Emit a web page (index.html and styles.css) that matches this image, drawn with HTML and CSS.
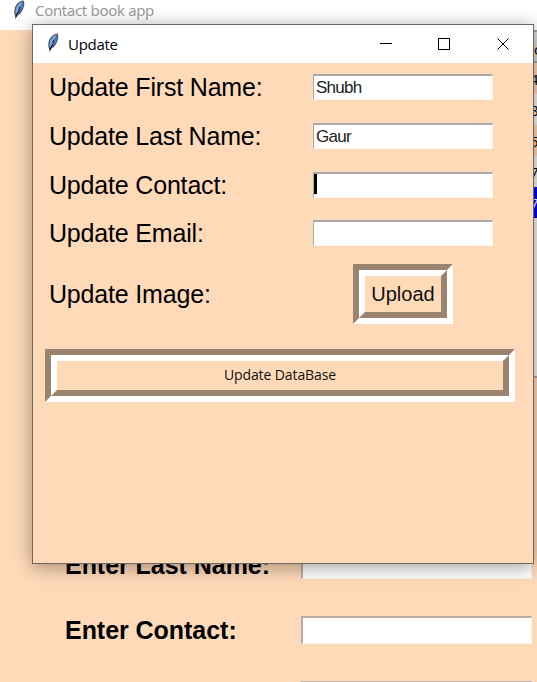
FILE: index.html
```html
<!DOCTYPE html>
<html lang="en">
<head>
<meta charset="utf-8">
<title>Contact book app</title>
<link rel="stylesheet" href="styles.css">
</head>
<body>
<svg width="0" height="0" class="defs">
  <symbol id="feather" viewBox="0 0 14 20">
    <path d="M11.500 .5C7.500 1 4 4.200 2.800 8C2 10.700 2.100 13.500 2.900 15.500L3.600 19.200L4.800 16C8.200 14.700 10.600 11 11.700 7C12.600 4.300 12.500 1.900 11.500 .5Z" fill="#4a535f"/>
    <path d="M10.800 1.400C7.600 2.200 4.800 5.300 3.900 8.500C3.300 10.700 3.300 12.700 3.700 14.500C6.700 11 9.200 6.500 10.800 1.400Z" fill="#76a8e0"/>
    <path d="M11 1.700C9.700 6.500 7.800 10.800 4.800 14.800C7.900 13.400 9.800 10 10.800 6.800C11.500 4.800 11.500 3.200 11 1.700Z" fill="#477cc6"/>
    <path d="M8 6.500L6.800 9.500L7.300 10.500L4.500 15V17" fill="none" stroke="#10151c" stroke-width=".9"/>
  </symbol>
</svg>
<div class="app">
  <header class="app-title"><svg class="feather"><use href="#feather"/></svg><span class="label app-name">Contact book app</span></header>
  <div class="table">
    <div class="th">c</div><div class="tr odd">4</div><div class="tr">8</div><div class="tr odd">5</div><div class="tr">7</div><div class="tr selected">7</div>
  </div>
  <div class="form">
    <div class="form-row"><label>Enter Last Name:</label><div class="field"></div></div>
    <div class="form-row contact"><label>Enter Contact:</label><div class="field"></div></div>
    <div class="form-row"><label></label><div class="field"></div></div>
  </div>
</div>
<div class="dialog">
  <header class="titlebar">
    <svg class="feather"><use href="#feather"/></svg><span class="label dialog-name">Update</span>
    <svg class="controls" width="132" height="12" fill="none" stroke="#000"><path d="M0 5.500H12M58.500 .5H69.500V11.500H58.500ZM117.500 .5L128.500 11.500M128.500 .5L117.500 11.500"/></svg>
  </header>
  <main>
    <div class="row"><label>Update First Name:</label><div class="entry">Shubh</div></div>
    <div class="row"><label>Update Last Name:</label><div class="entry">Gaur</div></div>
    <div class="row"><label>Update Contact:</label><div class="entry"><i class="caret"></i></div></div>
    <div class="row"><label>Update Email:</label><div class="entry"></div></div>
    <div class="row image-row"><label>Update Image:</label><div class="ridge upload"><div>Upload</div></div></div>
    <div class="ridge database"><div>Update DataBase</div></div>
  </main>
</div>
</body>
</html>
```
FILE: styles.css
```css
* { box-sizing: border-box; }
body { margin: 0; width: 537px; height: 682px; overflow: hidden; background: #ffdab9; font-family: "Liberation Sans", Arial, sans-serif; color: #000; }
.defs { position: absolute; }
.app { height: 682px; overflow: hidden; }
.app-title { height: 30px; background: #fff; display: flex; padding-left: 12px; }
.app-title .label { color: #969696; }
.feather { width: 14px; height: 20px; flex: none; }
.label { font: 15px/20px "Open Sans", "Noto Sans", sans-serif; letter-spacing: -.28px; white-space: nowrap; }
.app-name { margin-left: 9px; }
.table { margin-left: 533px; width: 80px; height: 348px; background: #f4f4f4; border-bottom: 2px solid #aaa; font: 15px/33px "Open Sans", sans-serif; text-indent: -3px; }
.th { height: 33px; background: #ddd; border-top: 2px solid #aaa; border-bottom: 2px solid #aaa; text-indent: 1px; line-height: 34px; }
.tr { height: 31px; background: #f4f4f4; }
.odd { background: #ffdab9; }
.selected { background: #00f; color: #fff; }
.form { padding: 173px 0 0 65px; }
.form-row { height: 65px; display: grid; grid-template-columns: 236px 231px; font-size: 25px; font-weight: bold; line-height: 28px; letter-spacing: -.04px; }
.form-row label { white-space: nowrap; }
.field { height: 28px; background: #fff; border: 1px solid #fff1e5; border-top: 2px solid #b8aea6; border-left: 2px solid #b8aea6; }
.dialog { position: absolute; left: 32px; top: 24px; width: 502px; height: 540px; border: 1px solid #70665d; background: #ffdab9; box-shadow: 0 3px 18px rgba(0,0,0,.38); }
.titlebar { height: 38px; background: #fff; display: flex; align-items: center; padding-left: 13px; }
.titlebar .feather { margin-top: -2px; }
.dialog-name { margin-left: 8px; width: 312px; }
main { padding: 11px 0 0 12px; }
.row { height: 48.8px; display: grid; grid-template-columns: 268px 180px; }
.row label { padding-left: 4px; font-size: 25px; line-height: 27px; letter-spacing: -.18px; white-space: nowrap; }
.entry { height: 26px; background: #fff; border: 1px solid #fff5ed; border-top: 2px solid #aaa; border-left: 1px solid #aaa; padding-left: 2px; font-size: 17px; line-height: 23px; letter-spacing: -.75px; color: #222; }
.caret { display: block; width: 3px; height: 20px; margin: 0 0 0 -2px; background: #000; }
.image-row { height: 79px; margin-top: -5.200px; align-items: start; }
.image-row label { margin-top: 17px; }
.ridge { border: 6px solid; border-color: #9b846f #fff #fff #9b846f; }
.ridge > div { height: 100%; border: 6px solid; border-color: #fff #9b846f #9b846f #fff; display: flex; align-items: center; justify-content: center; white-space: nowrap; color: #111; }
.upload { width: 100px; height: 60px; margin-left: 40px; font-size: 20px; }
.database { width: 470px; height: 53px; margin-top: 6px; font: 14px "Open Sans", sans-serif; letter-spacing: -.1px; }
.database > div { padding-bottom: 2px; }
```
